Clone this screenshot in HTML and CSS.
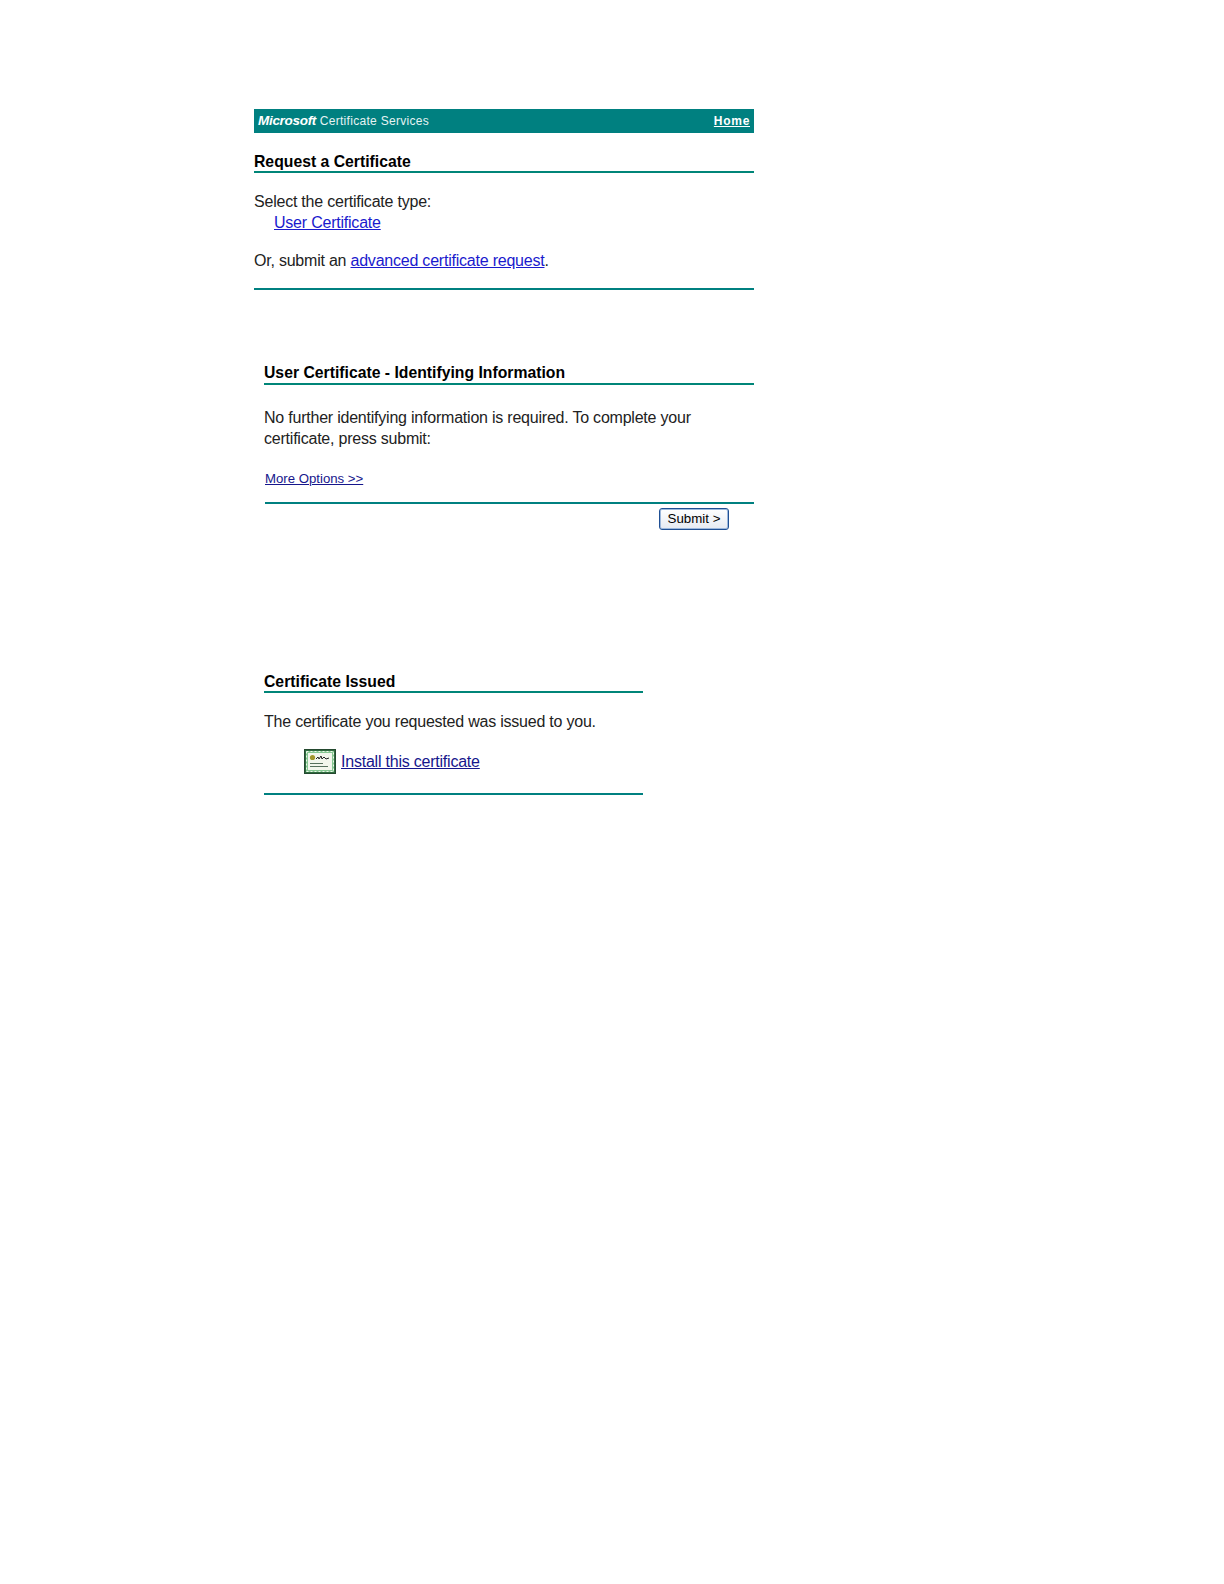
FILE: index.html
```html
<!DOCTYPE html>
<html lang="en">
<head>
    <meta charset="UTF-8">
    <title>Microsoft Certificate Services</title>
    <link rel="stylesheet" href="styles.css">
</head>
<body>
    <div class="page">
        <!-- request page -->
        <div class="top-bar">
            <span class="brand"><b class="brand-ms">Microsoft</b> Certificate Services</span>
            <a href="#" class="home-link">Home</a>
        </div>

        <div class="request">
            <h2 class="title">Request a Certificate</h2>
            <p class="select-text">Select the certificate type:</p>
            <a href="#" class="link user-link">User Certificate</a>
            <p class="or-text">Or, submit an <a href="#" class="link">advanced certificate request</a>.</p>
            <div class="rule request-end"></div>
        </div>

        <!-- identifying info -->
        <div class="identify">
            <h2 class="title">User Certificate - Identifying Information</h2>
            <p class="no-info">No further identifying information is required. To complete your certificate, press submit:</p>
            <a href="#" class="link-dark more-link">More Options &gt;&gt;</a>
            <div class="rule submit-rule"></div>
            <div class="submit-row">
                <button type="button" class="submit-btn">Submit &gt;</button>
            </div>
        </div>

        <!-- issued -->
        <div class="issued">
            <h2 class="title">Certificate Issued</h2>
            <p class="issued-text">The certificate you requested was issued to you.</p>
            <div class="install-row">
                <svg class="cert-icon" width="32" height="25" viewBox="0 0 32 25">
                    <rect x="0.5" y="0.5" width="31" height="24" fill="#2f6b3f" stroke="#24492f"/>
                    <rect x="2" y="2" width="28" height="21" fill="#86c792"/>
                    <path d="M2.5 2.5h27v20h-27z" fill="none" stroke="#eef7ea" stroke-width="1" stroke-dasharray="2 2"/>
                    <rect x="4" y="4" width="24" height="17" fill="#f2f6ec"/>
                    <circle cx="8.5" cy="8.5" r="2.6" fill="#a0962c"/>
                    <path d="M12 10l2-2 1 2 2-3 1 3 2-2 2 2 3-1" fill="none" stroke="#222" stroke-width="1"/>
                    <path d="M6 14.5h13M6 17.5h18" stroke="#56705c" stroke-width="1.2"/>
                </svg>
                <a href="#" class="link-dark install-link">Install this certificate</a>
            </div>
            <div class="rule issued-end"></div>
        </div>
    </div>
</body>
</html>
```

FILE: styles.css
```css
*{
    padding: 0;
    margin: 0;
    box-sizing: border-box;
}
body{
    background-color: #ffffff;
    color: #222222;
    font-family: "Liberation Sans", Arial, sans-serif;
    font-size: 16px;
    letter-spacing: -0.22px;
    line-height: 21px;
}

.page{
    width: 500px;
    margin-left: 254px;
    padding-top: 109px;
}

.top-bar{
    height: 24px;
    background-color: #008080;
    color: #e6f3f3;
    display: flex;
    justify-content: space-between;
    align-items: center;
    padding: 0 4px;
    font-size: 12px;
    letter-spacing: 0.3px;
}

.brand-ms{
    font-style: italic;
    color: white;
    font-size: 13.5px;
    letter-spacing: -0.3px;
}

.home-link{
    color: white;
    font-weight: bold;
    letter-spacing: 0.7px;
}

.title{
    font-size: 15.75px;
    letter-spacing: 0;
    line-height: 18px;
    font-weight: bold;
    color: #000000;
    border-bottom: 2px solid #008578;
    box-sizing: content-box;
}

.rule{
    height: 2px;
    background-color: #008080;
}

.link{
    color: #1a1acd;
}

.link-dark{
    color: #16168c;
}

.request .title{
    margin-top: 20px;
}

.select-text{
    margin-top: 18px;
}

.user-link{
    display: block;
    margin-left: 20px;
}

.or-text{
    margin-top: 17px;
}

.request-end{
    margin-top: 17px;
}

.identify{
    margin-left: 10px;
    margin-top: 72px;
}

.identify .title{
    line-height: 21px;
}

.no-info{
    margin-top: 22px;
}

.more-link{
    display: block;
    margin: 21px 0 0 1px;
    font-size: 13.2px;
    letter-spacing: 0;
    line-height: 17px;
}

.submit-rule{
    margin: 15px 0 0 1px;
}

.submit-row{
    display: flex;
    justify-content: flex-end;
    padding: 4px 25px 0 0;
}

.submit-btn{
    width: 70px;
    height: 22px;
    padding-bottom: 2px;
    font-family: "Liberation Sans", Arial, sans-serif;
    font-size: 13.3px;
    color: #000000;
    background: linear-gradient(#ffffff, #e6eaf2);
    border: 1px solid #1f4f94;
    box-shadow: inset 0 0 0 1px #9db8dc;
    border-radius: 3px;
}

.issued{
    width: 379px;
    margin-left: 10px;
    margin-top: 143px;
}

.issued-text{
    margin-top: 18px;
}

.install-row{
    display: flex;
    align-items: center;
    gap: 5px;
    margin: 17px 0 0 40px;
}

.issued-end{
    margin-top: 19px;
}
```
